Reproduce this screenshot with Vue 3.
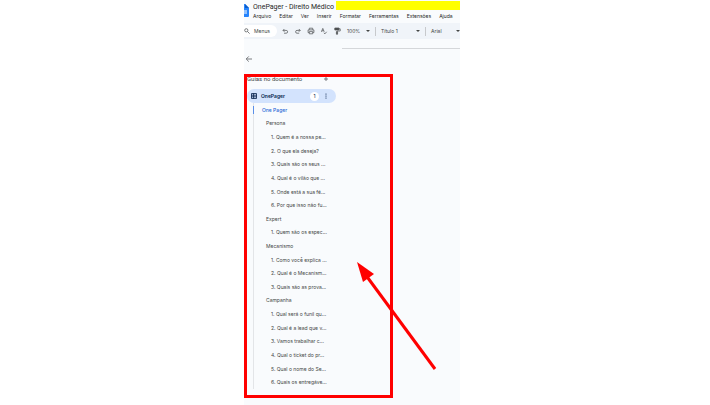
<script setup>
const menus = ['Arquivo', 'Editar', 'Ver', 'Inserir', 'Formatar', 'Ferramentas', 'Extensões', 'Ajuda']
const outline = [
  { level: 1, text: 'One Pager' },
  { level: 2, text: 'Persona' },
  { level: 3, text: '1. Quem é a nossa pe...' },
  { level: 3, text: '2. O que ela deseja?' },
  { level: 3, text: '3. Quais são os seus ...' },
  { level: 3, text: '4. Qual é o vilão que ...' },
  { level: 3, text: '5. Onde está a sua fé...' },
  { level: 3, text: '6. Por que isso não fu...' },
  { level: 2, text: 'Expert' },
  { level: 3, text: '1. Quem são os espec...' },
  { level: 2, text: 'Mecanismo' },
  { level: 3, text: '1. Como você explica ...' },
  { level: 3, text: '2. Qual é o Mecanism...' },
  { level: 3, text: '3. Quais são as prova...' },
  { level: 2, text: 'Campanha' },
  { level: 3, text: '1. Qual será o funil qu...' },
  { level: 3, text: '2. Qual é a lead que v...' },
  { level: 3, text: '3. Vamos trabalhar c...' },
  { level: 3, text: '4. Qual o ticket do pr...' },
  { level: 3, text: '5. Qual o nome do Se...' },
  { level: 3, text: '6. Quais os entregáve...' },
]
</script>

<template>
  <div class="page">
    <div class="editor">
      <header class="top">
        <svg class="logo" viewBox="0 0 5 14" aria-hidden="true">
          <path d="M0 0H1L5 4V12Q5 13 4 13H0Z" fill="#2684fc" />
          <path d="M1 0L5 4H1Z" fill="#0b5cc7" />
          <path d="M0 7H3M0 9H3" stroke="#fff" stroke-width="1" />
        </svg>
        <div class="heading">
          <div class="title-row">
            <h1>OnePager - Direito Médico</h1>
            <span class="marker"></span>
          </div>
          <nav class="menus">
            <button v-for="m in menus" :key="m" type="button">{{ m }}</button>
          </nav>
        </div>
      </header>

      <div class="toolbar">
        <button class="search" type="button">
          <svg class="glass" viewBox="0 0 6 6"><circle cx="2.3" cy="2.3" r="1.6" /><path d="M3.5 3.5L5.6 5.6" /></svg>
          Menus
        </button>
        <div class="tools">
          <button type="button" aria-label="Desfazer">
            <svg viewBox="0 0 8 8"><path d="M3.4 2L2 3.4L3.4 4.8M2 3.4H5.2A1.4 1.4 0 0 1 5.2 6.2H3" /></svg>
          </button>
          <button type="button" aria-label="Refazer">
            <svg viewBox="0 0 8 8"><path d="M4.8 2L6.2 3.4L4.8 4.8M6.2 3.4H3A1.4 1.4 0 0 0 3 6.2H5.2" /></svg>
          </button>
          <button type="button" aria-label="Imprimir">
            <svg viewBox="0 0 8 8"><path d="M2.3 2.8V1.2H5.7V2.8M2.3 5.6H1.1V2.9H6.9V5.6H5.7M2.3 4.6H5.7V6.8H2.3Z" /></svg>
          </button>
          <button type="button" aria-label="Ortografia">
            <svg viewBox="0 0 8 8"><path d="M1.4 4.8L2.8 1.4L4.2 4.8M1.9 3.8H3.7M3.8 5.8L5 6.8L6.6 4.8" /></svg>
          </button>
          <button type="button" aria-label="Pintar formatação">
            <svg viewBox="0 0 8 8"><path d="M1.8 1H6V3H1.8Z" fill="#444746" /><path d="M6 1.8H7.2V4H4V5" /><path d="M3.4 4.8H4.6V7.2H3.4Z" fill="#444746" /></svg>
          </button>
        </div>
        <button class="drop zoom" type="button">100%<i class="caret"></i></button>
        <span class="sep"></span>
        <button class="drop style" type="button">Título 1<i class="caret"></i></button>
        <span class="sep"></span>
        <button class="drop font" type="button">Arial<i class="caret"></i></button>
      </div>

      <div class="sheet-edge"></div>

      <aside class="sidebar">
        <button class="back" type="button" aria-label="Fechar">
          <svg viewBox="0 0 8 8"><path d="M7 4H1.4M3.8 1.4L1.2 4L3.8 6.6" /></svg>
        </button>
        <div class="tabs-head">
          <h2>Guias no documento</h2>
          <button type="button" aria-label="Adicionar guia">
            <svg viewBox="0 0 6 6"><path d="M3 1V5M1 3H5" /></svg>
          </button>
        </div>
        <div class="tab">
          <svg class="tab-icon" viewBox="0 0 6 6"><path d="M.5 .5H5.5V5.5H.5ZM.5 2.2H5.5M.5 3.8H5.5M2.6 .5V5.5" /></svg>
          <span class="tab-name">OnePager</span>
          <span class="badge">1</span>
          <button type="button" aria-label="Opções">
            <svg class="dots" viewBox="0 0 2 6"><circle cx="1" cy="1" r=".6" /><circle cx="1" cy="3" r=".6" /><circle cx="1" cy="5" r=".6" /></svg>
          </button>
        </div>
        <ul class="outline">
          <li v-for="(o, i) in outline" :key="i" :class="'level-' + o.level"><a href="#">{{ o.text }}</a></li>
        </ul>
      </aside>

      <div class="frame"></div>
      <svg class="arrow" viewBox="0 0 80 109" aria-hidden="true">
        <path d="M78 107L8 12" stroke="#f00" stroke-width="3" fill="none" />
        <path d="M0 0L17 12L6 20Z" fill="#f00" />
      </svg>
    </div>
  </div>
</template>

<style>
body {
  margin: 0;
  background: #fff;
}
</style>

<style scoped>
.page {
  display: flex;
  justify-content: center;
  padding-right: 6px;
  font-family: Inter, "Noto Sans", sans-serif;
  font-size: 5px;
  line-height: 8px;
  color: #444746;
}
.editor {
  position: relative;
  width: 216px;
  min-height: 100vh;
  background: #f9fbfd;
  overflow: hidden;
}
button {
  display: flex;
  align-items: center;
  padding: 0;
  border: 0;
  background: none;
  font: inherit;
  color: inherit;
  white-space: nowrap;
}
svg {
  display: block;
  fill: none;
  stroke: #5a5d60;
  stroke-width: 0.8;
}
h1, h2 {
  margin: 0;
  font-family: Roboto, sans-serif;
  font-weight: 400;
}
.top {
  display: flex;
  gap: 4px;
  height: 23px;
}
.logo {
  width: 5px;
  height: 14px;
  margin-top: 4px;
  stroke: none;
}
.heading {
  flex: 1;
  min-width: 0;
}
.title-row {
  display: flex;
  gap: 2px;
  height: 12px;
}
h1 {
  font-size: 7px;
  line-height: 14px;
  color: #1f1f1f;
  white-space: nowrap;
}
.marker {
  flex: 1;
  height: 9px;
  margin-top: 1px;
  background: #ff0;
}
.menus {
  display: flex;
  gap: 8px;
  color: #1f1f1f;
}
.toolbar {
  display: flex;
  align-items: center;
  height: 16px;
  background: #f0f4f9;
}
.search {
  gap: 4px;
  width: 33px;
  height: 12px;
  border-radius: 0 6px 6px 0;
  background: #fff;
}
.glass {
  width: 6px;
  height: 6px;
}
.tools {
  display: flex;
  gap: 5px;
  margin: 0 6px 0 4px;
}
.tools svg,
.back svg {
  width: 8px;
  height: 8px;
}
.drop {
  justify-content: space-between;
}
.zoom {
  width: 23px;
}
.style {
  width: 39px;
}
.font {
  width: 29px;
}
.caret {
  border: 2px solid transparent;
  border-top-color: #444746;
  border-bottom: 0;
}
.sep {
  width: 1px;
  height: 9px;
  margin: 0 5px;
  background: #c7c9cc;
}
.sheet-edge {
  height: 1px;
  margin: 9px 0 0 98px;
  background: #d5d7da;
}
.sidebar {
  width: 92px;
  padding-top: 6px;
}
.back {
  margin-left: 1px;
}
.tabs-head {
  display: flex;
  justify-content: space-between;
  align-items: center;
  margin-top: 12px;
  padding: 0 7px 0 3px;
}
h2 {
  font-size: 6px;
  line-height: 8px;
}
.tabs-head svg {
  width: 6px;
  height: 6px;
}
.tab {
  display: flex;
  align-items: center;
  height: 14px;
  margin: 6px 0 0 3px;
  padding: 0 9px 0 4px;
  border-radius: 7px;
  background: #d3e3fd;
  color: #041e49;
}
.tab-icon {
  width: 6px;
  height: 6px;
  stroke: #041e49;
}
.tab-name {
  flex: 1;
  margin-left: 4px;
  font-weight: 600;
}
.badge {
  width: 9px;
  height: 9px;
  margin-right: 6px;
  border-radius: 5px;
  background: #fff;
  line-height: 9px;
  text-align: center;
}
.dots {
  width: 2px;
  height: 6px;
  stroke: none;
  fill: #041e49;
}
.outline {
  display: grid;
  grid-auto-rows: 1fr;
  align-items: center;
  min-height: 286px;
  margin: 0 0 0 9px;
  padding: 0;
  border-left: 1px solid #e3e5e8;
  list-style: none;
}
.outline a {
  display: block;
  color: inherit;
  text-decoration: none;
  white-space: nowrap;
}
.level-1 {
  margin-left: -1px;
  padding-left: 8px;
  border-left: 1px solid #5a8fe8;
  color: #1f66d6;
  font-weight: 500;
}
.level-2 {
  padding-left: 12px;
}
.level-3 {
  padding-left: 17px;
}
.frame {
  position: absolute;
  top: 74px;
  left: 0;
  width: 143px;
  height: 318px;
  border: 3px solid #f00;
}
.arrow {
  position: absolute;
  top: 262px;
  left: 113px;
  width: 80px;
  height: 109px;
  stroke: none;
}
</style>
